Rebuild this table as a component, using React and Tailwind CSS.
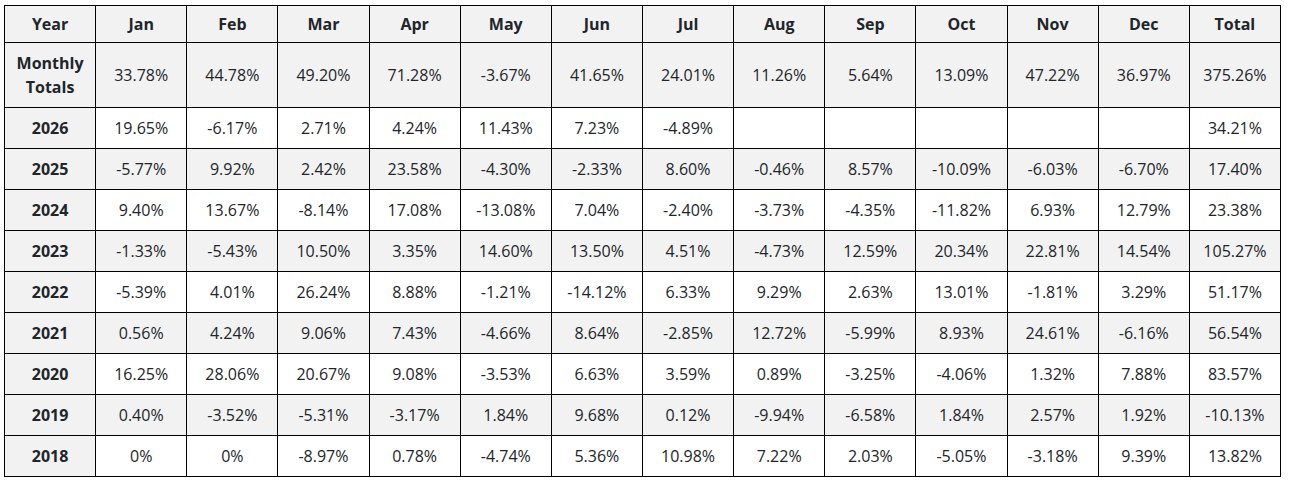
import React from "react";

const months = ["Jan","Feb","Mar","Apr","May","Jun","Jul","Aug","Sep","Oct","Nov","Dec"];

const rows = [
  ["2026", ["19.65%","-6.17%","2.71%","4.24%","11.43%","7.23%","-4.89%","","","","","","34.21%"]],
  ["2025", ["-5.77%","9.92%","2.42%","23.58%","-4.30%","-2.33%","8.60%","-0.46%","8.57%","-10.09%","-6.03%","-6.70%","17.40%"]],
  ["2024", ["9.40%","13.67%","-8.14%","17.08%","-13.08%","7.04%","-2.40%","-3.73%","-4.35%","-11.82%","6.93%","12.79%","23.38%"]],
  ["2023", ["-1.33%","-5.43%","10.50%","3.35%","14.60%","13.50%","4.51%","-4.73%","12.59%","20.34%","22.81%","14.54%","105.27%"]],
  ["2022", ["-5.39%","4.01%","26.24%","8.88%","-1.21%","-14.12%","6.33%","9.29%","2.63%","13.01%","-1.81%","3.29%","51.17%"]],
  ["2021", ["0.56%","4.24%","9.06%","7.43%","-4.66%","8.64%","-2.85%","12.72%","-5.99%","8.93%","24.61%","-6.16%","56.54%"]],
  ["2020", ["16.25%","28.06%","20.67%","9.08%","-3.53%","6.63%","3.59%","0.89%","-3.25%","-4.06%","1.32%","7.88%","83.57%"]],
  ["2019", ["0.40%","-3.52%","-5.31%","-3.17%","1.84%","9.68%","0.12%","-9.94%","-6.58%","1.84%","2.57%","1.92%","-10.13%"]],
  ["2018", ["0%","0%","-8.97%","0.78%","-4.74%","5.36%","10.98%","7.22%","2.03%","-5.05%","-3.18%","9.39%","13.82%"]],
];

const totals = ["33.78%","44.78%","49.20%","71.28%","-3.67%","41.65%","24.01%","11.26%","5.64%","13.09%","47.22%","36.97%","375.26%"];

export default function App() {
  return (
    <div className="bg-white pt-[5px] pl-[4px] min-h-[480px]" style={{ fontFamily: '"Open Sans", sans-serif' }}>
      <table className="w-[1277px] table-fixed border-collapse text-center text-[16px] leading-6 text-[#212529]">
        <thead>
          <tr className="bg-[#f2f2f2]">
            <th className="border border-black py-1.5 font-bold">Year</th>
            {months.map((m) => (
              <th key={m} className="border border-black py-1.5 font-bold">{m}</th>
            ))}
            <th className="border border-black py-1.5 font-bold">Total</th>
          </tr>
        </thead>
        <tbody>
          <tr className="bg-[#f2f2f2]">
            <th className="border border-black py-2 font-bold">Monthly<br />Totals</th>
            {totals.map((v, i) => (
              <td key={i} className="border border-black py-2 font-normal">{v}</td>
            ))}
          </tr>
          {rows.map(([year, vals], ri) => (
            <tr key={year} className={ri % 2 === 1 ? "bg-[#f2f2f2]" : "bg-white"}>
              <th className="border border-black py-2 font-bold bg-[#f2f2f2]">{year}</th>
              {vals.map((v, i) => (
                <td key={i} className="border border-black py-2 font-normal">{v}</td>
              ))}
            </tr>
          ))}
        </tbody>
      </table>
    </div>
  );
}
